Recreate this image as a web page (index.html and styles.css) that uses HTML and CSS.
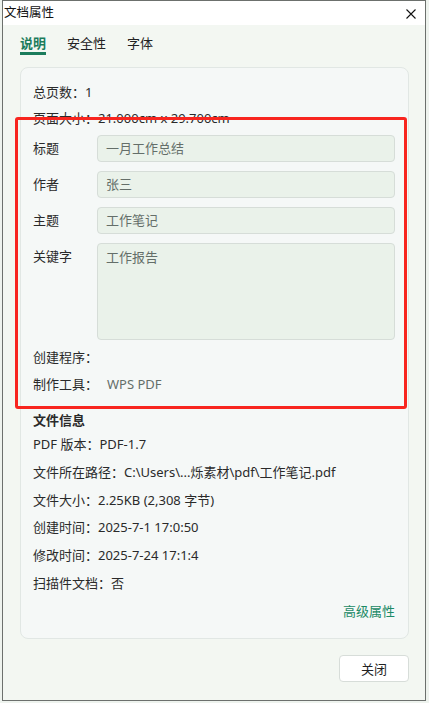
FILE: index.html
```html
<!DOCTYPE html>
<html lang="zh-CN">
<head>
<meta charset="utf-8">
<link rel="stylesheet" href="styles.css">
</head>
<body>
<div class="window">
  <div class="titlebar">
    <span class="title">文档属性</span>
    <svg class="close" width="10" height="10" viewBox="0 0 10 10"><path d="M0.5 0.5L9.5 9.5M9.5 0.5L0.5 9.5" stroke="#111" stroke-width="1.1" fill="none"/></svg>
  </div>
  <div class="tabs">
    <div class="tab active">说明</div>
    <div class="tab">安全性</div>
    <div class="tab">字体</div>
  </div>
  <div class="card">
    <div class="row">总页数：1</div>
    <div class="row">页面大小：21.000cm x 29.700cm</div>
    <div class="fields">
      <div class="field"><span class="label">标题</span><div class="input">一月工作总结</div></div>
      <div class="field"><span class="label">作者</span><div class="input">张三</div></div>
      <div class="field"><span class="label">主题</span><div class="input">工作笔记</div></div>
      <div class="field"><span class="label">关键字</span><div class="input area">工作报告</div></div>
    </div>
    <div class="row r27 gap">创建程序：</div>
    <div class="row r27">制作工具：<span class="val">WPS PDF</span></div>
    <div class="section">文件信息</div>
    <div class="row info">PDF 版本：PDF-1.7</div>
    <div class="row info">文件所在路径：C:\Users\...烁素材\pdf\工作笔记.pdf</div>
    <div class="row info">文件大小：2.25KB (2,308 字节)</div>
    <div class="row info">创建时间：2025-7-1 17:0:50</div>
    <div class="row info">修改时间：2025-7-24 17:1:4</div>
    <div class="row info">扫描件文档：否</div>
    <div class="adv">高级属性</div>
  </div>
  <div class="footer"><button class="btn">关闭</button></div>
</div>
<div class="highlight"></div>
</body>
</html>
```

FILE: styles.css
```css
* { box-sizing: border-box; }
html, body { margin: 0; padding: 0; }
body {
  width: 429px;
  height: 703px;
  background: #eef3ee;
  font-family: "Noto Sans", "Noto Sans CJK SC", sans-serif;
  font-size: 13px;
  color: #2a2a2a;
  overflow: hidden;
}
.window {
  margin-left: 2px;
  width: 424px;
  height: 701px;
  border: 1px solid #6c706d;
  background: #f3f7f2;
  display: flex;
  flex-direction: column;
}
.titlebar {
  height: 24px;
  background: #ffffff;
  display: flex;
  align-items: center;
  justify-content: space-between;
  padding: 0 9px 0 1px;
}
.title {
  font-size: 12.5px;
  line-height: 16px;
  color: #111;
}
.close { display: block; margin-top: 1px; }
.tabs {
  display: flex;
  gap: 21px;
  padding-left: 17px;
  height: 30px;
}
.tab {
  padding-top: 10px;
  line-height: 17px;
  font-size: 13px;
  color: #222;
  border-bottom: 3px solid transparent;
}
.tab.active {
  font-weight: bold;
  color: #1b7c5c;
  border-bottom-color: #1b7c5c;
}
.card {
  margin: 12px 16px 0 17px;
  height: 572px;
  border: 1px solid #e1e7e4;
  border-radius: 8px;
  background: #f5f8f7;
  padding: 11px 13px 0 12px;
  display: flex;
  flex-direction: column;
}
.row {
  height: 26px;
  line-height: 26px;
  white-space: nowrap;
}
.r27 { height: 27px; line-height: 27px; }
.gap { margin-top: 4px; }
.val { margin-left: 9px; color: #646e69; }
.fields {
  margin-top: 4px;
  display: flex;
  flex-direction: column;
  gap: 9px;
}
.field {
  display: grid;
  grid-template-columns: 64px 1fr;
}
.label { line-height: 27px; }
.input {
  height: 27px;
  border: 1px solid #d6ddd8;
  border-radius: 4px;
  background: #eaf2ea;
  padding-left: 8px;
  line-height: 25px;
  color: #646e69;
}
.input.area {
  height: 97px;
  line-height: 27px;
}
.section {
  margin-top: 11px;
  height: 22px;
  line-height: 22px;
  font-weight: bold;
}
.info { height: 27.8px; line-height: 27.8px; }
.adv {
  height: 27px;
  line-height: 27px;
  text-align: right;
  color: #1b8a66;
}
.footer {
  display: flex;
  justify-content: flex-end;
  padding: 16px 16px 0 0;
}
.btn {
  width: 70px;
  height: 27px;
  background: #ffffff;
  border: 1px solid #d7ddd9;
  border-radius: 4px;
  font-family: "Noto Sans", "Noto Sans CJK SC", sans-serif;
  font-size: 13px;
  color: #222;
  padding: 0;
}
.highlight {
  position: absolute;
  left: 15px;
  top: 117px;
  width: 392px;
  height: 292px;
  border: 3px solid #f8251f;
  border-radius: 3px;
}
```
